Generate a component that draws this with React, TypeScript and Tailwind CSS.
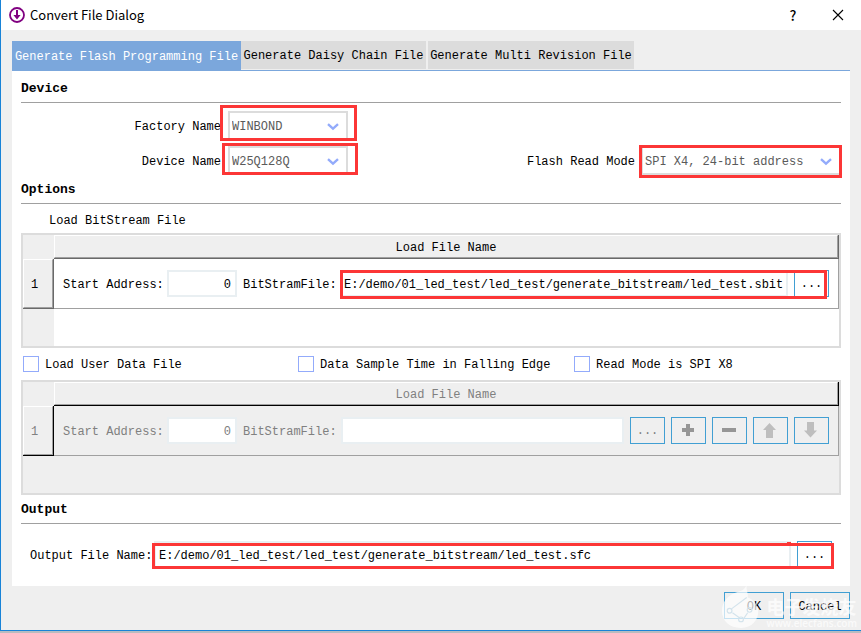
import React, { useState } from "react"

const tabs = [
  { label: "Generate Flash Programming File", width: "w-[229px]" },
  { label: "Generate Daisy Chain File", width: "w-[185px]" },
  { label: "Generate Multi Revision File", width: "w-[206px]" },
]

const toolButton =
  "flex h-[27px] w-[35px] shrink-0 items-center justify-center border border-[#419fd3] bg-transparent"

const lineEdit = "h-[27px] border-2 border-[#e9eff2] bg-white pt-[2px] outline-none"

const Mark = ({ className }: { className: string }) => (
  <span className={`pointer-events-none absolute border-3 border-[#fc3636] ${className}`} />
)

const Section = ({ title }: { title: string }) => (
  <h2 className="flex h-[29px] items-center border-b border-[#a0a0a0] pt-[2px] text-[13px] font-bold">{title}</h2>
)

type PickerProps = { id: string; value: string; className: string; mark: string }

const Picker = ({ id, value, className, mark }: PickerProps) => (
  <div className={`relative h-[29px] ${className}`}>
    <select
      id={id}
      defaultValue={value}
      className="h-full w-full appearance-none border-2 border-[#dcdcdc] bg-white pt-[2px] pl-[2px] text-[#5a5a5a] outline-none"
    >
      <option>{value}</option>
    </select>
    <svg className="pointer-events-none absolute top-[12px] right-[9px]" width="12" height="8" viewBox="0 0 12 8">
      <path d="M1 1.2 6 5.6 11 1.2" fill="none" stroke="#93abfb" strokeWidth="2.4" />
    </svg>
    <Mark className={mark} />
  </div>
)

const Check = ({ id, label, className }: { id: string; label: string; className: string }) => (
  <div className={`flex items-center gap-[6px] ${className}`}>
    <input id={id} type="checkbox" className="size-4 appearance-none border border-[#93abfb] bg-white checked:bg-[#93abfb]" />
    <label htmlFor={id} className="pt-[2px]">
      {label}
    </label>
  </div>
)

type FileTableProps = { id: string; disabled?: boolean; children: React.ReactNode }

const FileTable = ({ id, disabled, children }: FileTableProps) => {
  const edge = disabled ? "border-black" : "border-[#696969]"
  return (
    <div className={`h-[115px] border-2 border-[#dcdcdc] ${disabled ? "bg-[#efefef] text-[#808080]" : "bg-white"}`}>
      <table className="h-full w-full table-fixed border-separate border-spacing-0">
        <thead>
          <tr className="h-[24px] bg-[#efefef]">
            <td className="w-[31px] p-0" />
            <th className={`border-r border-b ${edge} p-0 font-normal`}>
              <div className="h-[23px] border border-t-white border-r-[#a0a0a0] border-b-[#a0a0a0] border-l-white pt-[4px]">
                Load File Name
              </div>
            </th>
          </tr>
        </thead>
        <tbody>
          <tr className="h-[50px]">
            <th className={`border-r border-b ${edge} bg-[#efefef] p-0 font-normal`}>
              <div className="flex h-[49px] items-center justify-center border border-t-white border-r-[#a0a0a0] border-b-[#a0a0a0] border-l-white pt-[3px] pr-[7px]">
                1
              </div>
            </th>
            <td className="border-r border-b border-[#a0a0a0] p-0">
              <div className="flex items-center px-[9px]">
                <label htmlFor={`${id}-start`} className="w-[104px] shrink-0 pt-[2px]">
                  Start Address:
                </label>
                <input
                  id={`${id}-start`}
                  defaultValue="0"
                  disabled={disabled}
                  className={`w-[70px] shrink-0 pr-[4px] text-right ${lineEdit}`}
                />
                <label htmlFor={`${id}-file`} className="ml-[6px] w-[98px] shrink-0 pt-[2px]">
                  BitStramFile:
                </label>
                {children}
              </div>
            </td>
          </tr>
          <tr>
            <td className="bg-[#efefef] p-0" />
            <td className="p-0" />
          </tr>
        </tbody>
      </table>
    </div>
  )
}

const Watermark = () => (
  <div className="pointer-events-none absolute right-[4px] bottom-0 flex items-end gap-[6px] text-white/70">
    <svg width="40" height="46" viewBox="0 0 42 46">
      <path
        d="M27 0c-1 6 2 8 1 13 6 2 10 7 11 13 1 11-7 19-18 19C9 45 1 38 1 27 1 17 8 10 18 7c5-1 7-3 9-7Z"
        fill="currentColor"
      />
      <g fill="none" stroke="#d3e3ec" strokeWidth="1.2">
        <path d="M11 25 27 13M24 35 28 29M12 29l7 5" />
        <circle cx="9" cy="27" r="2.5" />
        <circle cx="21" cy="36" r="2.5" />
        <circle cx="30" cy="26" r="2.5" />
      </g>
    </svg>
    <div className="font-[Noto_Sans_CJK_SC,sans-serif]">
      <div className="text-[18px] leading-[20px] font-bold">电子发烧友</div>
      <div className="font-[Open_Sans,sans-serif] text-[10px] leading-[14px] font-semibold">www.elecfans.com</div>
    </div>
  </div>
)

const App: React.FC = () => {
  const [active, setActive] = useState(0)

  return (
    <div className="w-full bg-[#b9bcc0] pb-[2px] font-[Liberation_Mono,monospace] text-[12px] leading-[16px] text-black">
      <div className="relative border-b border-l border-[#1883d7] bg-[#efefef]">
        <header className="flex h-[30px] items-center bg-white pr-[17px] pl-[8px] font-[Noto_Sans_CJK_SC,sans-serif]">
          <svg width="16" height="16" viewBox="0 0 16 16">
            <circle cx="8" cy="8" r="7" fill="none" stroke="#800080" strokeWidth="1.8" />
            <path d="M7 3h2v5h2.6L8 12.4 4.4 8H7Z" fill="#800080" />
          </svg>
          <h1 className="ml-[5px] flex-1 text-[13px]">Convert File Dialog</h1>
          <button aria-label="Help" className="mr-[33px] w-[12px] text-[14px] font-medium">
            ?
          </button>
          <button aria-label="Close">
            <svg width="12" height="12" viewBox="0 0 12 12">
              <path d="M1 1l10 10M11 1 1 11" stroke="black" strokeWidth="1.1" />
            </svg>
          </button>
        </header>

        <main className="px-[11px] pt-[11px] pb-[11px]">
          <div role="tablist" className="flex h-[30px] items-start border-b border-[#7ba7dc]">
            {tabs.map((tab, index) => (
              <button
                key={tab.label}
                role="tab"
                aria-selected={active === index}
                onClick={() => setActive(index)}
                className={`pt-[2px] whitespace-nowrap ${tab.width} ${
                  active === index ? "h-[29px] bg-[#7ba7dc] text-white" : "h-[28px] bg-[#dcdcdc]"
                } ${index === 2 ? "ml-[2px]" : ""}`}
              >
                {tab.label}
              </button>
            ))}
          </div>

          <div className="bg-white px-[9px] pt-[3px] pb-[18px]">
            <Section title="Device" />
            <div className="flex flex-col gap-[6px] pt-[8px]">
              <div className="flex items-center">
                <label htmlFor="factory" className="mr-[7px] w-[200px] pt-[2px] text-right">
                  Factory Name
                </label>
                <Picker id="factory" value="WINBOND" className="w-[120px]" mark="-top-[6px] -right-[9px] -bottom-[1px] -left-[8px]" />
              </div>
              <div className="flex items-center">
                <label htmlFor="device" className="mr-[7px] w-[200px] pt-[2px] text-right">
                  Device Name
                </label>
                <Picker id="device" value="W25Q128Q" className="w-[120px]" mark="-top-[3px] -right-[10px] bottom-0 -left-[6px]" />
                <label htmlFor="mode" className="mr-[6px] ml-auto pt-[2px]">
                  Flash Read Mode
                </label>
                <Picker id="mode" value="SPI X4, 24-bit address" className="w-[200px]" mark="-top-[1px] -right-[1px] -bottom-[3px] -left-[2px]" />
              </div>
            </div>

            <Section title="Options" />
            <div className="flex h-[29px] items-center pt-[4px] pl-[28px]">Load BitStream File</div>
            <FileTable id="bitstream">
              <div className="relative flex flex-1 gap-[6px]">
                <input
                  id="bitstream-file"
                  defaultValue="E:/demo/01_led_test/led_test/generate_bitstream/led_test.sbit"
                  className={`min-w-0 flex-1 pl-[1px] ${lineEdit}`}
                />
                <button className={toolButton}>...</button>
                <Mark className="top-0 right-[2px] -bottom-[2px] -left-[1px]" />
              </div>
            </FileTable>

            <div className="flex h-[32px] items-center pl-[2px]">
              <Check id="user-data" label="Load User Data File" className="w-[275px]" />
              <Check id="falling-edge" label="Data Sample Time in Falling Edge" className="w-[276px]" />
              <Check id="spi-x8" label="Read Mode is SPI X8" className="" />
            </div>

            <FileTable id="user" disabled>
              <div className="flex flex-1 gap-[6px]">
                <input id="user-file" disabled className={`min-w-0 flex-1 pl-[1px] ${lineEdit}`} />
                <button disabled className={toolButton}>
                  ...
                </button>
                <button disabled aria-label="Add" className={toolButton}>
                  <svg width="13" height="13" viewBox="0 0 13 13">
                    <path d="M4 0h4v4h4v4H8v4H4V8H0V4h4Z" fill="#969696" />
                  </svg>
                </button>
                <button disabled aria-label="Remove" className={toolButton}>
                  <svg width="15" height="5" viewBox="0 0 15 5">
                    <path d="M0 0h14v4H0Z" fill="#969696" />
                  </svg>
                </button>
                <button disabled aria-label="Move up" className={toolButton}>
                  <svg width="15" height="17" viewBox="0 0 15 17">
                    <path d="M6.500 1l6.500 7H10v8H3V8H0Z" fill="#bebebe" />
                  </svg>
                </button>
                <button disabled aria-label="Move down" className={toolButton}>
                  <svg width="15" height="17" viewBox="0 0 15 17">
                    <path d="M6.500 15.500 0 8.500h3V0h7v8.500h3Z" fill="#bebebe" />
                  </svg>
                </button>
              </div>
            </FileTable>

            <Section title="Output" />
            <div className="flex items-center pt-[17px] pr-[9px] pl-[9px]">
              <label htmlFor="output" className="w-[124px] shrink-0 pt-[2px]">
                Output File Name:
              </label>
              <div className="relative flex flex-1 gap-[6px]">
                <input
                  id="output"
                  defaultValue="E:/demo/01_led_test/led_test/generate_bitstream/led_test.sfc"
                  className={`min-w-0 flex-1 pl-[3px] ${lineEdit}`}
                />
                <button className={toolButton}>...</button>
                <Mark className="top-[2px] -right-[2px] -bottom-[1px] -left-[2px]" />
                <span className="pointer-events-none absolute top-[1px] right-[41px] h-[2px] w-[4px] bg-[#fc3636]" />
              </div>
            </div>
          </div>

          <div className="flex justify-end gap-[6px] pt-[6px]">
            <button className="h-[27px] w-[60px] border border-[#419fd3] pt-[2px]">OK</button>
            <button className="h-[27px] w-[60px] border border-[#419fd3] pt-[2px]">Cancel</button>
          </div>
        </main>
        <Watermark />
      </div>
    </div>
  )
}

export default App
